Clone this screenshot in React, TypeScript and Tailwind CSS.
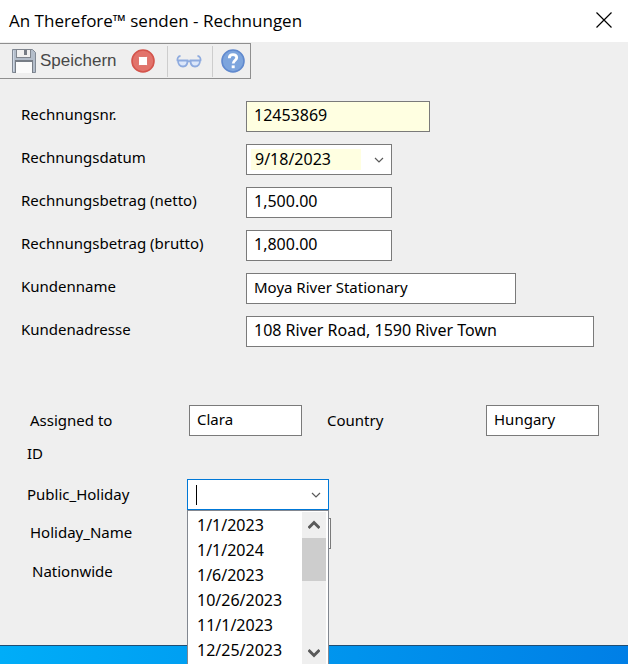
import { useState } from "react";

const ui = "font-['Noto_Sans','Open_Sans',sans-serif]";
const fieldBox = "h-[31px] border border-[#7a7a7a] bg-white";

function Chevron() {
  return (
    <svg width="10" height="6" viewBox="0 0 10 6" fill="none" className="pointer-events-none shrink-0" aria-hidden="true">
      <path d="M1 1 L5 5 L9 1" stroke="#5a5a5a" strokeWidth="1.2" />
    </svg>
  );
}

function SaveIcon() {
  return (
    <svg width="24" height="24" viewBox="0 0 24 24" aria-hidden="true">
      <path d="M0.5 0.5H20.5L23.5 3.5V23.5H0.5Z" fill="#b3bdca" stroke="#818994" />
      <path d="M1.5 1.5V22.5" stroke="#cfd8e5" />
      <rect x="4" y="0" width="15" height="9" fill="#7f858e" />
      <rect x="5" y="1" width="13" height="7" fill="#f1f1f1" />
      <rect x="12" y="1" width="3" height="5" fill="#777d86" />
      <rect x="3" y="11" width="18" height="13" fill="#777d86" />
      <rect x="4" y="13" width="16" height="11" fill="#fbfbfb" />
    </svg>
  );
}

function StopIcon() {
  return (
    <svg width="24" height="24" viewBox="0 0 24 24" aria-hidden="true">
      <circle cx="12" cy="12" r="11" fill="#e2736b" stroke="#d4544c" strokeWidth="1.6" />
      <rect x="7.5" y="7.5" width="9" height="9" rx="1" fill="#fff" stroke="#d9655d" strokeWidth="0.8" />
    </svg>
  );
}

function GlassesIcon() {
  return (
    <svg width="26" height="14" viewBox="0 0 26 14" fill="none" aria-hidden="true">
      <path d="M2 6.5H11.5C11.5 10.5 9.5 12.5 7 12.5C4 12.5 2 10 2 6.5Z" fill="#dce7fa" stroke="#8eabdf" strokeWidth="1.8" />
      <path d="M14.5 6.5H24C24 10 22 12.5 19 12.5C16.5 12.5 14.5 10.5 14.5 6.5Z" fill="#dce7fa" stroke="#8eabdf" strokeWidth="1.8" />
      <path d="M1.5 7C1 4 2.5 2 4.5 2M24.5 7C25 4 23.5 2 21.5 2M11.5 8C12.5 6.8 13.5 6.8 14.5 8" stroke="#8eabdf" strokeWidth="1.8" />
    </svg>
  );
}

function HelpIcon() {
  return (
    <svg width="24" height="24" viewBox="0 0 24 24" fill="none" aria-hidden="true">
      <circle cx="12" cy="12" r="11" fill="#7da5dd" stroke="#6089ce" strokeWidth="1.6" />
      <path d="M8.3 9.2C8.3 6.8 9.8 5.7 12 5.7C14.3 5.7 15.7 7 15.7 8.8C15.7 11.2 12.2 11.4 12.2 14.6" stroke="#fff" strokeWidth="2.8" />
      <rect x="10.7" y="16.4" width="3" height="2.8" fill="#fff" />
    </svg>
  );
}

type FieldProps = { id: string; label: string; value: string; width: string; tone?: string; size?: string };

function FieldRow({ id, label, value, width, tone = "bg-white", size = "text-base" }: FieldProps) {
  return (
    <div className="flex items-center">
      <label htmlFor={id} className="w-[225px] shrink-0 pb-1.5">{label}</label>
      <input id={id} defaultValue={value} className={`h-[31px] border border-[#7a7a7a] px-[7px] pb-1 outline-none ${width} ${tone} ${size}`} />
    </div>
  );
}

const holidays = ["1/1/2023", "1/1/2024", "1/6/2023", "10/26/2023", "11/1/2023", "12/25/2023"];

export default function App() {
  const [holiday, setHoliday] = useState("");

  return (
    <div className={`flex h-screen flex-col overflow-hidden bg-[#efefef] text-[15px] leading-5 text-black ${ui}`}>
      <header className="flex h-[42px] shrink-0 items-center justify-between bg-white pr-[15px] pl-[9px]">
        <h1 className="font-['Open_Sans','Noto_Sans',sans-serif] text-[17px] leading-6">An Therefore™ senden - Rechnungen</h1>
        <button type="button" aria-label="Schließen" className="pr-px pb-0.5">
          <svg width="16" height="16" viewBox="0 0 16 16" className="block" aria-hidden="true">
            <path d="M0.5 0.5L15.5 15.5M15.5 0.5L0.5 15.5" stroke="#000" strokeWidth="1.2" />
          </svg>
        </button>
      </header>

      <div role="toolbar" aria-label="Aktionen" className="mt-px flex h-9 w-[251px] shrink-0 items-center border border-l-0 border-[#8f8f8f] pl-3">
        <button type="button" className="flex items-center gap-1 font-['Liberation_Sans',Arial,sans-serif] text-[17px] text-[#474747]">
          <SaveIcon />
          Speichern
        </button>
        <button type="button" aria-label="Abbrechen" className="ml-3.5"><StopIcon /></button>
        <div className="mr-2 ml-3 h-[31px] w-px bg-[#cdcdcd]" />
        <button type="button" aria-label="Anzeigen"><GlassesIcon /></button>
        <div className="mr-2 ml-2.5 h-[31px] w-px bg-[#cdcdcd]" />
        <button type="button" aria-label="Hilfe"><HelpIcon /></button>
      </div>

      <form className="min-h-0 flex-1 pt-[22px] pl-[21px]" onSubmit={(e) => e.preventDefault()}>
        <div className="flex flex-col gap-3">
          <FieldRow id="nr" label="Rechnungsnr." value="12453869" width="w-[184px]" tone="bg-[#ffffe1]" />
          <div className="flex items-center">
            <label htmlFor="datum" className="w-[225px] shrink-0 pb-1.5">Rechnungsdatum</label>
            <div className={`flex w-[146px] items-center justify-between pr-[7px] pl-1 ${fieldBox}`}>
              <select id="datum" defaultValue="9/18/2023" className="h-[21px] w-[110px] appearance-none bg-[#ffffe1] pb-0.5 pl-1 text-base leading-5 outline-none">
                <option>9/18/2023</option>
              </select>
              <Chevron />
            </div>
          </div>
          <FieldRow id="netto" label="Rechnungsbetrag (netto)" value="1,500.00" width="w-[146px]" />
          <FieldRow id="brutto" label="Rechnungsbetrag (brutto)" value="1,800.00" width="w-[146px]" />
          <FieldRow id="name" label="Kundenname" value="Moya River Stationary" width="w-[270px]" size="text-[15px]" />
          <FieldRow id="adresse" label="Kundenadresse" value="108 River Road, 1590 River Town" width="w-[348px]" />
        </div>

        <div className="mt-[58px] flex items-center">
          <label htmlFor="assigned" className="w-[168px] pb-0.5 pl-[9px]">Assigned to</label>
          <input id="assigned" defaultValue="Clara" className={`w-[113px] px-[7px] pb-1 outline-none ${fieldBox}`} />
          <label htmlFor="country" className="ml-[25px] w-[159px] pb-0.5">Country</label>
          <input id="country" defaultValue="Hungary" className={`w-[113px] px-[7px] pb-1 outline-none ${fieldBox}`} />
        </div>

        <div className="mt-[7px] pl-1.5">ID</div>

        <div className="mt-4 flex items-center">
          <label htmlFor="holiday" className="w-[166px] pb-0.5 pl-1.5">Public_Holiday</label>
          <div className="relative w-[142px]">
            <div className="flex h-[31px] items-center border border-[#0078d7] bg-white pr-[7px] pl-2">
              <span className="h-5 w-px shrink-0 bg-black" />
              <input id="holiday" role="combobox" aria-expanded="true" aria-controls="holiday-list" value={holiday} onChange={(e) => setHoliday(e.target.value)} className="min-w-0 flex-1 caret-transparent outline-none" />
              <Chevron />
            </div>
            <div className="absolute top-[31px] left-0 z-10 flex w-[142px] border border-[#828790] bg-white pr-0.5">
              <ul id="holiday-list" role="listbox" aria-label="Public_Holiday" className="flex-1 pt-0.5 text-base">
                {holidays.map((day) => (
                  <li key={day} role="option" aria-selected={day === holiday} onClick={() => setHoliday(day)} className="h-[25px] pl-[9px] leading-[25px]">
                    {day}
                  </li>
                ))}
              </ul>
              <div className="mt-px flex h-[154px] w-6 flex-col items-center bg-[#efefef]">
                <svg width="12" height="10" viewBox="0 0 12 10" fill="none" className="my-2 shrink-0" aria-hidden="true">
                  <path d="M0.5 8L6 2.5L11.5 8" stroke="#5a5a5a" strokeWidth="3" />
                </svg>
                <div className="h-[43px] w-6 shrink-0 bg-[#cdcdcd]" />
                <svg width="12" height="10" viewBox="0 0 12 10" fill="none" className="mt-auto mb-2 shrink-0" aria-hidden="true">
                  <path d="M0.5 2L6 7.5L11.5 2" stroke="#5a5a5a" strokeWidth="3" />
                </svg>
              </div>
            </div>
          </div>
        </div>

        <div className="mt-2 flex items-center">
          <label htmlFor="holidayname" className="w-[166px] pb-1 pl-[9px]">Holiday_Name</label>
          <input id="holidayname" className={`w-36 outline-none ${fieldBox}`} />
        </div>
        <div className="mt-3 pl-[11px]">Nationwide</div>
      </form>

      <div className="h-[19px] shrink-0 border-t border-[#1f4e74] bg-linear-to-r from-[#00adf8] via-[#0096ee] to-[#007fe6]" />
    </div>
  );
}
